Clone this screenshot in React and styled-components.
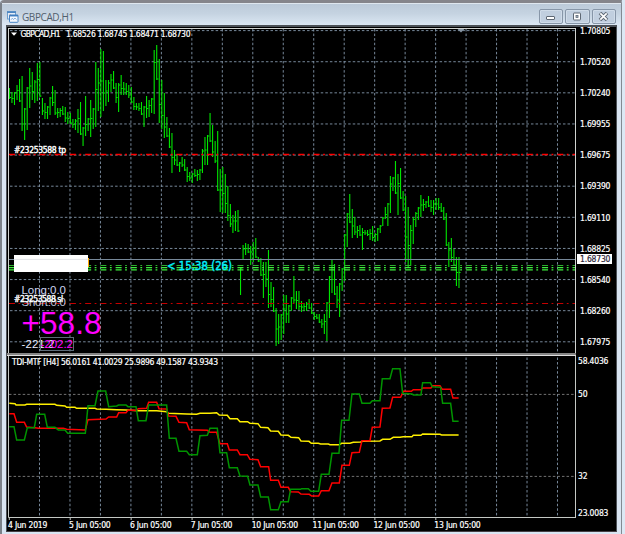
import styled, { createGlobalStyle, css } from 'styled-components';

const GlobalStyle = createGlobalStyle`
  * {
    box-sizing: border-box;
  }
  body {
    margin: 0;
    overflow: hidden;
    background-color: #dce8f4;
  }
`;

const uiFont = css`
  font-family: 'DejaVu Sans Condensed', 'DejaVu Sans', sans-serif;
  font-stretch: condensed;
`;

const StyledWindow = styled.main`
  display: grid;
  grid-template-rows: 22px 507px;
  width: 622px;
  height: 534px;
  border-top: 3px solid #85858b;
  border-left: 2px solid #7b8189;
  border-right: 1px solid #838a92;
  background-color: #d9e5f2;
  border-top-left-radius: 4px;
`;

const TitleBar = styled.header`
  display: flex;
  align-items: center;
  gap: 3px;
  padding: 4px 5px 0 5px;
  border-top: 1px solid #dfe7ef;
  background: linear-gradient(#bccad9, #c5d3e1 45%, #dbe7f3);
`;

const Title = styled.h1`
  flex: 1;
  margin: 0;
  font: 10px/14px 'Open Sans', 'Noto Sans', sans-serif;
  letter-spacing: -0.4px;
  color: #52606e;
`;

const WindowButtons = styled.div`
  display: flex;
  gap: 2px;
`;

const WindowButton = styled.button`
  display: grid;
  place-items: center;
  width: 24.5px;
  height: 15px;
  padding: 0;
  border: 1px solid #8796a8;
  border-radius: 2px;
  background-color: #c1cfdf;
  box-shadow: inset 0 0 0 1px #d0dce9;
`;

const Client = styled.section`
  display: grid;
  grid-template-columns: 569px 1fr;
  grid-template-rows: 329px 164px 1fr;
  width: 611px;
  margin-left: 4px;
  border: 1px solid #4c5157;
  border-top-width: 2px;
  border-bottom-color: #453f44;
  background-color: #000;
`;

const Plot = styled.svg`
  display: block;
  width: 569px;
  height: ${(props) => props.$height}px;
  overflow: hidden;
`;

const axisText = css`
  ${uiFont}
  font-size: 8.5px;
  line-height: 10px;
  letter-spacing: -0.2px;
  white-space: nowrap;
  color: #fff;
  -webkit-text-stroke: 0.2px currentColor;
`;

const PriceAxis = styled.div`
  ${axisText}
  position: relative;
  display: flex;
  flex-direction: column;
  justify-content: space-between;
  height: 321px;
  margin-top: -1px;
  padding-left: 4px;
`;

const PriceTag = styled.span`
  ${axisText}
  position: absolute;
  top: 228px;
  left: 1px;
  width: 35px;
  padding-left: 3px;
  background-color: #fff;
  color: #2b2438;
`;

const IndicatorAxis = styled.div`
  ${axisText}
  display: grid;
  grid-template-rows: 33px 82px 37px 10px;
  padding: 0 0 0 2px;
`;

const TimeAxis = styled.div`
  ${axisText}
  display: grid;
  grid-column: 1 / -1;
  grid-template-columns: 61px repeat(7, 60.9px);
  padding: 0 0 0 1px;
`;

const verticals = Array.from({ length: 18 }, (_, i) => 39.5 + i * 30.47);
const horizontals = Array.from({ length: 11 }, (_, i) => 30.6 + i * 31.12);

const prices = [
  '1.70805',
  '1.70520',
  '1.70240',
  '1.69955',
  '1.69675',
  '1.69390',
  '1.69110',
  '1.68825',
  '1.68540',
  '1.68260',
  '1.67975',
];

const times = [
  '4 Jun 2019',
  '5 Jun 05:00',
  '6 Jun 05:00',
  '7 Jun 05:00',
  '10 Jun 05:00',
  '11 Jun 05:00',
  '12 Jun 05:00',
  '13 Jun 05:00',
];

// [high, low] of every hourly bar, in chart pixels
// prettier-ignore
const bars = [
  [88, 99], [92, 103], [92, 105], [85, 100], [79, 102], [76, 131], [108, 140], [87, 130],
  [68, 108], [72, 100], [80, 103], [63, 101], [62, 97], [98, 115], [103, 119], [106, 119],
  [97, 115], [86, 106], [90, 115], [108, 118], [108, 117], [106, 115], [107, 122], [112, 124],
  [113, 124], [119, 128], [119, 130], [109, 133], [102, 135], [127, 146], [96, 136], [118, 131],
  [100, 137], [108, 129], [62, 127], [68, 111], [49, 117], [51, 111], [80, 106], [80, 102],
  [74, 92], [71, 89], [83, 103], [83, 112], [75, 95], [82, 95], [83, 95], [85, 98],
  [87, 103], [97, 110], [103, 110], [103, 111], [102, 115], [106, 127], [96, 118], [100, 117],
  [98, 113], [50, 114], [45, 80], [59, 123], [80, 129], [93, 138], [117, 137], [128, 148],
  [133, 173], [150, 165], [154, 166], [162, 172], [157, 167], [159, 171], [167, 182], [172, 181],
  [173, 183], [169, 177], [170, 181], [169, 180], [149, 173], [137, 165], [135, 165], [113, 142],
  [125, 157], [141, 163], [131, 191], [169, 212], [167, 213], [174, 213], [186, 221], [204, 227],
  [215, 233], [211, 231], [210, 232], [267, 295], [245, 260], [243, 255], [244, 253], [246, 265],
  [242, 262], [238, 258], [257, 262], [258, 276], [262, 298], [262, 287], [250, 308], [282, 307],
  [287, 312], [308, 346], [314, 344], [314, 340], [295, 334], [295, 323], [305, 323], [297, 311],
  [276, 303], [291, 309], [291, 310], [301, 312], [303, 311], [302, 311], [299, 309], [303, 314],
  [312, 320], [314, 319], [314, 323], [319, 328], [314, 334], [302, 341], [276, 318], [259, 293],
  [264, 295], [286, 308], [283, 317], [268, 291], [234, 281], [213, 247], [194, 223], [209, 238],
  [217, 235], [226, 238], [225, 236], [228, 250], [230, 235], [230, 236], [229, 240], [226, 241],
  [233, 242], [228, 241], [225, 233], [217, 226], [207, 219], [203, 226], [176, 213], [177, 191],
  [161, 194], [174, 215], [168, 199], [191, 211], [196, 262], [207, 267], [225, 266], [217, 244],
  [212, 227], [207, 220], [195, 217], [199, 211], [201, 208], [196, 207], [200, 212], [200, 215],
  [198, 210], [198, 210], [203, 212], [207, 220], [213, 246], [242, 267], [238, 262], [249, 266],
  [257, 286], [257, 288],
];

const clamp = (value, min, max) => Math.min(Math.max(value, min), max);

const barPath = bars
  .map(([high, low], i) => {
    const x = 9.4 + i * 2.54;
    const [nextHigh, nextLow] = bars[i + 1] || [high, low];
    const close = clamp((nextHigh + nextLow) / 2, high + 1, low - 1);
    return `M${x.toFixed(2)} ${high}V${low}M${x.toFixed(2)} ${close}h1.6`;
  })
  .join('');

// Indicator curves, three units to the pixel
const signal =
  '28,160 45,161 48,165 75,165 80,163 165,163 170,166 195,168 200,172 225,172 230,175 285,175 290,177 318,178 350,179 378,180 415,182 470,182 500,185 505,190 560,192 590,193 600,190 630,190 650,188 658,195 682,196 690,206 712,206 720,215 743,215 750,220 774,221 782,232 804,233 812,243 835,244 843,255 865,256 873,262 896,263 903,273 927,274 934,280 955,280 962,282 985,282 990,284 1018,284 1025,280 1050,280 1060,277 1082,276 1088,274 1140,273 1148,268 1170,268 1180,262 1200,262 1210,260 1236,260 1240,256 1263,256 1268,252 1320,253 1325,255 1376,255';
const slow =
  '28,191 42,191 50,217 73,217 80,231 105,233 115,235 190,235 200,238 256,240 264,209 318,207 326,201 350,201 356,188 378,188 384,181 410,181 415,176 440,175 446,157 470,157 477,176 500,177 506,198 528,199 537,217 560,218 568,239 590,240 622,241 630,247 650,247 660,281 682,281 688,300 712,300 720,314 742,314 750,328 774,329 782,350 806,350 812,391 835,391 843,412 865,412 872,425 895,426 903,432 928,433 935,438 956,438 964,422 987,422 996,399 1018,399 1026,346 1048,346 1056,308 1078,307 1086,272 1110,272 1117,232 1140,231 1147,175 1170,174 1178,142 1202,142 1210,124 1234,124 1240,119 1263,119 1268,114 1293,114 1298,107 1320,107 1327,118 1352,118 1359,144 1376,144';
const fast =
  '28,230 42,230 50,270 73,270 82,233 103,233 110,193 134,193 142,232 165,232 175,240 195,240 203,250 256,250 264,167 285,167 294,123 317,123 326,170 350,168 356,165 378,165 384,170 408,170 415,212 438,212 446,165 500,165 508,265 528,265 537,304 560,304 568,314 592,314 600,257 622,256 630,235 652,235 660,308 680,308 688,353 712,353 720,378 743,379 750,405 774,405 782,441 805,441 812,479 835,479 843,455 865,455 872,418 902,418 905,416 925,416 933,424 956,424 964,373 987,373 996,310 1017,310 1025,211 1047,211 1056,132 1078,132 1086,160 1110,160 1117,152 1140,152 1147,86 1170,86 1178,56 1200,56 1208,130 1236,132 1240,135 1263,135 1268,98 1291,98 1297,110 1322,112 1328,160 1352,160 1359,214 1376,214';

const ChartText = styled.text`
  ${uiFont}
  font-size: ${(props) => props.$size || 8.5}px;
  fill: ${(props) => props.$color || '#fff'};
  stroke: ${(props) => props.$color || '#fff'};
  stroke-width: ${(props) => (props.$bold ? 0.4 : 0.2)};
`;

const PanelText = styled.text`
  font-family: 'Liberation Sans', Arial, sans-serif;
  font-size: ${(props) => props.$size}px;
  fill: ${(props) => props.$color};
`;

const GridLine = styled.path`
  fill: none;
  stroke: ${(props) => props.$color || '#7d8fa2'};
  stroke-width: 0.95;
  stroke-dasharray: 2.5 2.07;
`;

const OrderLine = styled.path`
  fill: none;
  stroke: ${(props) => props.$color};
  stroke-width: ${(props) => props.$width || 1};
  stroke-dasharray: 6 3.5 1.8 3.93;
`;

const Curve = styled.polyline`
  fill: none;
  stroke: ${(props) => props.$color};
  stroke-width: 4.5;
`;

function WindowIcon() {
  return (
    <svg width="12" height="12" viewBox="0 0 12 12">
      <rect x="0.5" y="0.5" width="8" height="7.5" fill="#e4eef8" stroke="#6d9dcc" />
      <path d="M0 1.2h9" stroke="#4d86c2" strokeWidth="1.6" />
      <path d="M2 4.5l1.5-1" stroke="#d88a8a" />
      <rect x="2.5" y="4" width="8.5" height="7.3" rx="0.5" fill="#f4f9ff" stroke="#4784c4" />
      <path d="M2.5 4.7h8.5" stroke="#3f7dc0" strokeWidth="1.5" />
      <path d="M4 8.8l1.3-1.6 1.2 1.4 1.4-1.6 1.5 1.5" fill="none" stroke="#86aedb" />
    </svg>
  );
}

function PriceChart() {
  return (
    <Plot $height={329} viewBox="7 27 569 329">
      {verticals.map((x) => (
        <GridLine key={x} d={`M${x} 29V353`} />
      ))}
      {horizontals.map((y) => (
        <GridLine key={y} d={`M10 ${y}H576`} />
      ))}
      <path d={barPath} fill="none" stroke="#00e600" strokeWidth="1.1" />
      <OrderLine $color="#ff0000" $width={1.3} d="M9 154.5H576" />
      <OrderLine $color="#c40000" d="M9 303.5H576" />
      <path d="M9 259.5H576" stroke="#778899" />
      <OrderLine $color="#2fae2f" d="M9 265.5H576" />
      <OrderLine $color="#3cf03c" $width={1.2} d="M9 267.6H576" />
      <OrderLine $color="#3cf03c" $width={1.2} d="M9 269.8H576" />

      <path d="M88 258v9" stroke="#ffa500" strokeWidth="2" />
      <rect x="14" y="255" width="74" height="17" fill="#fff" />
      <path d="M14 259.4h74" stroke="#d6dade" strokeWidth="0.7" />
      <ChartText
        x="167"
        y="270.4"
        $size={11.5}
        $color="#00f0ff"
        $bold
        textLength="65"
        lengthAdjust="spacingAndGlyphs"
      >
        &lt; 15:38 (26)
      </ChartText>

      <ChartText x="14" y="153.2" $bold textLength="52">
        #23253588 tp
      </ChartText>
      <PanelText x="21.5" y="294.4" $size={11.5} $color="#cfd6f2" textLength="44.5">
        Long:0.0
      </PanelText>
      <PanelText x="21.5" y="306.3" $size={11.5} $color="#b9c4dc" textLength="44.5">
        Short:0.0
      </PanelText>
      <ChartText x="14" y="301.8" $bold textLength="49">
        #23253588 sl
      </ChartText>
      <PanelText x="21.5" y="333.6" $size={31.5} $color="#ff00ff" textLength="80">
        +58.8
      </PanelText>
      <PanelText x="21.5" y="348" $size={11.5} $color="#e8ecff" textLength="33">
        -221.2
      </PanelText>
      <rect x="40.5" y="337.5" width="33" height="13" fill="none" stroke="#5c6b78" />
      <PanelText x="40.5" y="348" $size={11.5} $color="#ff00ff" textLength="32.5">
        -202.2
      </PanelText>

      <path d="M11 32.5h6l-3 3.3z" fill="#fff" />
      <ChartText x="20.5" y="37.4" textLength="40">
        GBPCAD,H1
      </ChartText>
      <ChartText x="66" y="37.4" textLength="124.5">
        1.68526 1.68745 1.68471 1.68730
      </ChartText>
      <path d="M457.5 29h7l-3.5 3.4z" fill="#8795a3" />
      <path d="M8.5 28.5H576M8.5 28V353M575.5 28V353" fill="none" stroke="#d0d3d0" />
      <path d="M7 354H576" stroke="#858585" strokeWidth="2" />
      <path d="M7 355.5H576" stroke="#dedede" />
    </Plot>
  );
}

function IndicatorChart() {
  return (
    <Plot $height={164} viewBox="7 356 569 164">
      {verticals.map((x) => (
        <GridLine key={x} d={`M${x} 357.5V517`} />
      ))}
      <GridLine $color="#777" d="M9 394.4H576M9 476.4H576" />
      <g transform="translate(0 350) scale(0.3333)">
        <Curve $color="#fff000" points={signal} />
        <Curve $color="#ff0000" points={slow} />
        <Curve $color="#009400" points={fast} />
      </g>
      <ChartText x="12" y="365.3" textLength="206">
        TDI-MTF [H4] 56.0161 41.0029 25.9896 49.1587 43.9343
      </ChartText>
      <path d="M8.5 356V517.5H576M575.5 356V517" fill="none" stroke="#c4c8c4" />
      {times.map((time, i) => (
        <path key={time} d={`M${9.3 + i * 60.93} 517v3`} stroke="#c4c8c4" />
      ))}
    </Plot>
  );
}

function App() {
  return (
    <>
      <GlobalStyle />
      <StyledWindow>
        <TitleBar>
          <WindowIcon />
          <Title>GBPCAD,H1</Title>
          <WindowButtons>
            <WindowButton aria-label="Minimize">
              <svg width="11" height="9" viewBox="0 0 11 9">
                <rect x="1.5" y="4.5" width="8" height="3" rx="0.5" fill="#fff" stroke="#5e6874" />
              </svg>
            </WindowButton>
            <WindowButton aria-label="Maximize">
              <svg width="10" height="9" viewBox="0 0 10 9">
                <rect x="1.5" y="1" width="7" height="7" rx="0.5" fill="#fff" stroke="#5e6874" />
                <rect x="4" y="3.5" width="2" height="2" fill="#aebccb" stroke="#5e6874" strokeWidth="0.8" />
              </svg>
            </WindowButton>
            <WindowButton aria-label="Close">
              <svg width="11" height="9" viewBox="0 0 11 9">
                <path d="M2 1l7 7M9 1l-7 7" stroke="#5e6874" strokeWidth="3.6" />
                <path d="M2.3 1.3l6.4 6.4M8.7 1.3l-6.4 6.4" stroke="#fff" strokeWidth="1.7" />
              </svg>
            </WindowButton>
          </WindowButtons>
        </TitleBar>
        <Client>
          <PriceChart />
          <PriceAxis>
            {prices.map((price) => (
              <span key={price}>{price}</span>
            ))}
            <PriceTag>1.68730</PriceTag>
          </PriceAxis>
          <IndicatorChart />
          <IndicatorAxis>
            <span>58.4036</span>
            <span>50</span>
            <span>32</span>
            <span>23.0083</span>
          </IndicatorAxis>
          <TimeAxis>
            {times.map((time) => (
              <span key={time}>{time}</span>
            ))}
          </TimeAxis>
        </Client>
      </StyledWindow>
    </>
  );
}

export default App;
